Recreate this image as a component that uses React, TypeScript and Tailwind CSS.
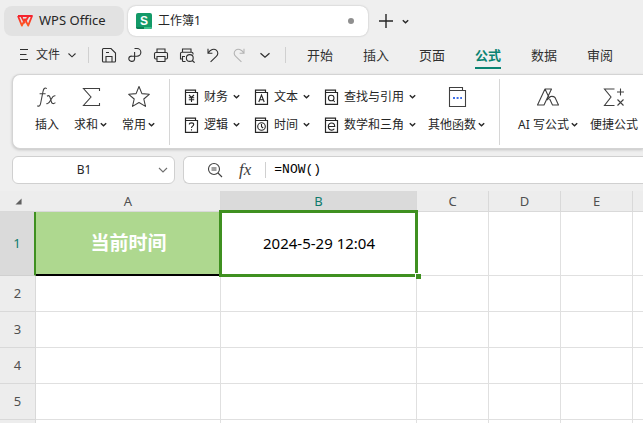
// App.tsx
import type { ReactNode } from "react";

const MENUS = ["开始", "插入", "页面", "公式", "数据", "审阅"];
const COLUMNS = ["A", "B", "C", "D", "E", ""];
const ROWS = ["2", "3", "4", "5", ""];

function Icon({ children, className = "size-4" }: { children: ReactNode; className?: string }) {
  return (
    <svg
      viewBox="0 0 16 16"
      fill="none"
      stroke="currentColor"
      strokeWidth="1.1"
      className={`shrink-0 ${className}`}
      aria-hidden="true"
    >
      {children}
    </svg>
  );
}

function BigIcon({ children }: { children: ReactNode }) {
  return (
    <svg viewBox="0 0 24 24" fill="none" stroke="currentColor" strokeWidth="1.1" className="size-6" aria-hidden="true">
      {children}
    </svg>
  );
}

function Caret() {
  return (
    <svg viewBox="0 0 7 7" fill="none" stroke="currentColor" strokeWidth="1.4" className="size-[7px] shrink-0" aria-hidden="true">
      <path d="M0.8 2.2 3.5 4.8 6.2 2.2" />
    </svg>
  );
}

function WpsLogo() {
  return (
    <svg viewBox="0 0 16 12" className="h-3 w-4 shrink-0" aria-hidden="true">
      <defs>
        <linearGradient id="wps" x1="0" y1="0" x2="0" y2="1">
          <stop offset="0" stopColor="#f5212d" />
          <stop offset="1" stopColor="#ff5a1f" />
        </linearGradient>
      </defs>
      <path
        d="M1 1H15L11.2 10.6 8 4.2 4.9 10.6 1 1M4.2 1.2 7.8 8.4M11.4 1.2 8.6 6.2"
        fill="none"
        stroke="url(#wps)"
        strokeWidth="1.8"
        strokeLinejoin="round"
      />
    </svg>
  );
}

function SheetLogo() {
  return (
    <span className="relative flex size-4 shrink-0 items-center justify-center overflow-hidden rounded-xs bg-[#139a68]">
      <span className="absolute inset-x-0 bottom-0 h-0.5 bg-[#0b7f55]" />
      <span className="absolute right-0 bottom-0 h-0.5 w-2 bg-[#3cc08c]" />
      <span className="relative font-['Liberation_Sans'] text-[12px] leading-3 font-bold text-white">S</span>
    </span>
  );
}

const TOOLS: { label: string; icon: ReactNode; faded?: boolean }[] = [
  {
    label: "保存",
    icon: <path d="M1.5 2.5Q1.5 1.5 2.5 1.5H10L14.5 6V14Q14.5 15 13.5 15H2.5Q1.5 15 1.5 14ZM5 15V9.5H11V15M5 5.5H8" />,
  },
  {
    label: "输出为PDF",
    icon: <path d="M7.5 1.5H10A3.8 3.8 0 0 1 10 9.2H5A2.9 2.6 0 1 0 7.6 12V5" />,
  },
  {
    label: "打印",
    icon: <path d="M4 5.5V2H12V5.5M4 12H2.8Q1.5 12 1.5 10.8V6.8Q1.5 5.5 2.8 5.5H13.2Q14.5 5.5 14.5 6.8V10.8Q14.5 12 13.2 12H12M4 9.5H12V14.5H4Z" />,
  },
  {
    label: "打印预览",
    icon: (
      <>
        <path d="M3.5 5V2H12V5M3.5 12H1.5V6.5Q1.5 5.2 2.8 5.2H12.7Q14 5.2 14 6.5V7.5M3.5 14.5H6V14M3.5 14.5V9.5H6" />
        <circle cx="10.8" cy="11" r="3.4" />
        <path d="M13.3 13.5 15.6 15.7" />
      </>
    ),
  },
  { label: "撤销", icon: <path d="M3 1.8V6.2H7.4M3.2 6C5.5 2.5 9 1.4 11.3 3.1C13.5 5 13.1 7.8 11.3 9.4L5.6 14.8" /> },
  {
    label: "恢复",
    icon: <path d="M13 1.8V6.2H8.6M12.8 6C10.5 2.5 7 1.4 4.7 3.1C2.5 5 2.9 7.8 4.7 9.4L10.4 14.8" />,
    faded: true,
  },
  { label: "更多", icon: <path d="M3.5 6.2 8 10.2 12.5 6.2" strokeWidth="1.3" /> },
];

const CATEGORIES: { label: string; glyph: ReactNode }[] = [
  { label: "财务", glyph: <path d="M5 6 7.5 8.5 10 6M7.5 8.5V13M4.8 8.7H10.2M4.8 10.8H10.2" /> },
  { label: "文本", glyph: <path d="M4.8 13 7.5 6 10.2 13M5.8 10.8H9.2" /> },
  {
    label: "查找与引用",
    glyph: (
      <>
        <circle cx="7.2" cy="9" r="2.8" />
        <path d="M9 11 10.8 13" />
      </>
    ),
  },
  { label: "逻辑", glyph: <path d="M5.3 7.6C5.3 5.3 9.7 5.3 9.7 7.6C9.7 9.2 7.5 9.2 7.5 11M7.5 12.2V13.4" /> },
  {
    label: "时间",
    glyph: (
      <>
        <circle cx="7.5" cy="9.5" r="3.8" />
        <path d="M7.5 7V9.8L9.2 11" />
      </>
    ),
  },
  { label: "数学和三角", glyph: <path d="M4.3 9.5H10.7C10.7 4.9 4.3 4.9 4.3 9.5C4.3 13.5 8.8 14 10.3 11.8" /> },
];

function BigButton({ label, icon, caret = true }: { label: string; icon: ReactNode; caret?: boolean }) {
  return (
    <button type="button" className="flex shrink-0 flex-col items-center gap-2 pb-1.5 text-[12px] leading-4 text-[#262626]">
      <span className="text-[#404040]">{icon}</span>
      <span className="flex items-center gap-0.5 whitespace-nowrap">
        {label}
        {caret && <Caret />}
      </span>
    </button>
  );
}

function TitleBar() {
  return (
    <header className="flex items-center pt-1.5 pl-1 text-[#262626]">
      <button type="button" className="flex h-[30px] w-[120px] items-center gap-1.5 rounded-lg bg-[#e2e2e2] pl-[13px] text-[13px]">
        <WpsLogo />
        WPS Office
      </button>
      <div className="ml-1 flex h-[30px] w-[240px] items-center gap-1.5 rounded-lg bg-white px-2 text-[12px] shadow-[0_0_2px_#00000040]">
        <SheetLogo />
        <span>工作簿1</span>
        <span className="mr-1.5 ml-auto size-1.5 rounded-full bg-[#8f8f8f]" />
      </div>
      <button type="button" aria-label="新建" className="ml-2.5">
        <Icon>
          <path d="M8 1V15M1 8H15" strokeWidth="1.4" />
        </Icon>
      </button>
      <button type="button" aria-label="标签列表" className="ml-2">
        <Caret />
      </button>
    </header>
  );
}

function MenuBar() {
  return (
    <nav className="flex h-[38px] items-center pl-4 text-[#303030]">
      <button type="button" className="flex items-center gap-1 text-[12px]">
        <Icon>
          <path d="M4 2.5H12M4 7.5H10.5M4 12.5H12" />
        </Icon>
        文件
        <Icon>
          <path d="M4.5 6.5 8 9.8 11.5 6.5" />
        </Icon>
      </button>
      <span className="ml-2 h-4 w-px bg-[#d0d0d0]" />
      <div className="ml-3 flex gap-2.5">
        {TOOLS.map((t) => (
          <button key={t.label} type="button" aria-label={t.label} className={t.faded ? "text-[#b4b4b4]" : ""}>
            <Icon>{t.icon}</Icon>
          </button>
        ))}
      </div>
      <span className="ml-3 h-4 w-px bg-[#d0d0d0]" />
      <div className="ml-[21px] flex gap-[30px] self-stretch text-[13px] whitespace-nowrap">
        {MENUS.map((m) => (
          <button
            key={m}
            type="button"
            className={
              m === "公式"
                ? "my-[5px] border-b-2 border-[#0a8372] pt-1 font-bold text-[#0a8372]"
                : "my-[5px] border-b-2 border-transparent pt-1"
            }
          >
            {m}
          </button>
        ))}
      </div>
    </nav>
  );
}

function Ribbon() {
  return (
    <section className="ml-3 flex h-[75px] items-center overflow-hidden rounded-l-lg border border-r-0 border-[#d4d4d4] bg-white pl-[22px] shadow-[0_1px_3px_#00000030]">
      <div className="flex gap-[15px]">
        <BigButton
          label="插入"
          caret={false}
          icon={
            <BigIcon>
              <path d="M11.8 3.6C9.6 2 8.5 4 8 6.5L5.7 18C5.2 20.8 4.2 21.8 2.3 20.7M4.6 8.8H10.6M12 11.2C14.5 9.4 15 12 15.8 15C16.6 18.2 17.6 19.8 20.4 17.6M20.4 10.8C17.5 10 16.8 13.5 15.4 15.6C14 18.5 13 19.3 11.4 18.6" />
            </BigIcon>
          }
        />
        <BigButton
          label="求和"
          icon={
            <BigIcon>
              <path d="M20.5 6V3.5H4.5L12 12 4.5 20.5H20.5V18" />
            </BigIcon>
          }
        />
        <BigButton
          label="常用"
          icon={
            <BigIcon>
              <path d="M12 1.5 14.9 8.6 22.3 9.3 16.8 14 18.5 21.4 12 17.5 5.5 21.4 7.2 14 1.7 9.3 9.1 8.6Z" strokeLinejoin="round" />
            </BigIcon>
          }
        />
      </div>
      <span className="mx-3.5 h-[66px] w-px shrink-0 bg-[#d6d6d6]" />
      <div className="grid shrink-0 grid-cols-[auto_auto_auto] gap-x-3.5 gap-y-3 pb-0.5 text-[12px] leading-4 text-[#262626]">
        {CATEGORIES.map((c) => (
          <button key={c.label} type="button" className="flex items-center gap-1 whitespace-nowrap">
            <Icon>
              <path d="M1.5 3.5V15.3H13.5V3.5H1.5V1.2H11.5V3.5" strokeWidth="1.2" />
              {c.glyph}
            </Icon>
            <span className="mr-px">{c.label}</span>
            <Caret />
          </button>
        ))}
      </div>
      <div className="ml-3">
        <BigButton
          label="其他函数"
          icon={
            <BigIcon>
              <path d="M4.5 5.5V21.5H20.5V5.5H4.5V2.5H17.5V5.5" />
              <path d="M8 13H17" stroke="#3f6fe8" strokeWidth="2" strokeDasharray="2 1.6" />
            </BigIcon>
          }
        />
      </div>
      <span className="mx-3.5 h-[66px] w-px shrink-0 bg-[#d6d6d6]" />
      <div className="ml-1 flex gap-3">
        <BigButton
          label="AI 写公式"
          icon={
            <BigIcon>
              <path d="M1.5 20 9 4H15.5L8 20ZM9 4 16.5 20H22.5L19 12.5Q17.5 11 14.5 11.5L11 15" strokeLinejoin="round" />
            </BigIcon>
          }
        />
        <BigButton
          label="便捷公式"
          caret={false}
          icon={
            <BigIcon>
              <path d="M12.5 4H2.5L9 12 2.5 20.5H12.5M18.5 3.5V10.5M15 7H22M15.5 14.5 21.5 20.5M21.5 14.5 15.5 20.5" />
            </BigIcon>
          }
        />
      </div>
    </section>
  );
}

function FormulaBar() {
  return (
    <div className="flex gap-2 py-[7px] pl-3">
      <div className="flex h-7 w-[163px] shrink-0 items-center rounded-md border border-[#d0d0d0] bg-white">
        <input
          aria-label="名称框"
          defaultValue="B1"
          className="w-full min-w-0 text-center text-[12px] text-[#262626] outline-none"
        />
        <button type="button" aria-label="名称列表" className="mr-[3px] text-[#707070]">
          <Icon>
            <path d="M4 6 8 10 12 6" />
          </Icon>
        </button>
      </div>
      <div className="flex h-7 flex-1 items-center rounded-l-md border border-r-0 border-[#d0d0d0] bg-white pl-[23px] text-[#404040]">
        <button type="button" aria-label="缩小">
          <Icon>
            <circle cx="7" cy="7" r="5.5" />
            <path d="M4.5 6H9.5M4.5 8H9.5M11 11 15 15" />
          </Icon>
        </button>
        <label htmlFor="formula" className="ml-4 font-['Liberation_Serif'] text-[17px] leading-5 italic">
          fx
        </label>
        <span className="mr-2 ml-3.5 h-4 w-px bg-[#d0d0d0]" />
        <input
          id="formula"
          defaultValue="=NOW()"
          className="min-w-0 flex-1 font-['Liberation_Mono',monospace] text-[13px] text-black outline-none"
        />
      </div>
    </div>
  );
}

function Sheet() {
  const head = "border-r border-b border-[#d9d9d9] font-normal";
  return (
    <div className="min-h-0 flex-1 overflow-hidden">
      <table className="w-[705px] table-fixed border-separate border-spacing-0 bg-white text-center text-[13px] text-[#505050]">
        <colgroup>
          <col className="w-9" />
          <col className="w-[185px]" />
          <col className="w-[196px]" />
          <col className="w-[72px]" />
          <col className="w-[72px]" />
          <col className="w-[72px]" />
          <col className="w-[72px]" />
        </colgroup>
        <thead>
          <tr className="h-[21px] bg-[#ededed] leading-5">
            <th className="border-b border-[#d9d9d9]">
              <svg viewBox="0 0 8 8" className="ml-[15px] size-[7px]" aria-hidden="true">
                <path d="M7.5 0.5V7.5H0.5Z" fill="#606060" />
              </svg>
            </th>
            {COLUMNS.map((c) => (
              <th key={c} scope="col" className={c === "B" ? `${head} bg-[#dadada] text-[#0f7a6c]` : head}>
                {c}
              </th>
            ))}
          </tr>
        </thead>
        <tbody>
          <tr className="h-16">
            <th scope="row" className="border-r-2 border-b border-r-[#3f9020] border-b-[#d0d0d0] bg-[#dadada] font-normal text-[#0f7a6c]">
              1
            </th>
            <td className="border-b-2 border-black bg-[#aed88f] text-[19px] font-bold text-white">当前时间</td>
            <td className="relative border-b border-[#e0e0e0] text-[15px] text-black">
              2024-5-29 12:04
              <span className="absolute -top-0.5 -right-px -bottom-0.5 -left-0.5 border-3 border-[#3f9020]" />
              <span className="absolute -right-1 -bottom-1 size-1.5 border-t border-l border-white bg-[#3f9020]" />
            </td>
            {COLUMNS.slice(2).map((c) => (
              <td key={c} className="border-r border-b border-[#e0e0e0]" />
            ))}
          </tr>
          {ROWS.map((r) => (
            <tr key={r} className="h-9">
              <th scope="row" className={`${head} bg-[#ededed]`}>
                {r}
              </th>
              {COLUMNS.map((c) => (
                <td key={c} className="border-r border-b border-[#e0e0e0]" />
              ))}
            </tr>
          ))}
        </tbody>
      </table>
    </div>
  );
}

export default function App() {
  return (
    <main className="flex h-screen flex-col overflow-hidden bg-[#efefef] font-['Noto_Sans','Noto_Sans_CJK_SC',sans-serif]">
      <TitleBar />
      <MenuBar />
      <Ribbon />
      <FormulaBar />
      <Sheet />
    </main>
  );
}
